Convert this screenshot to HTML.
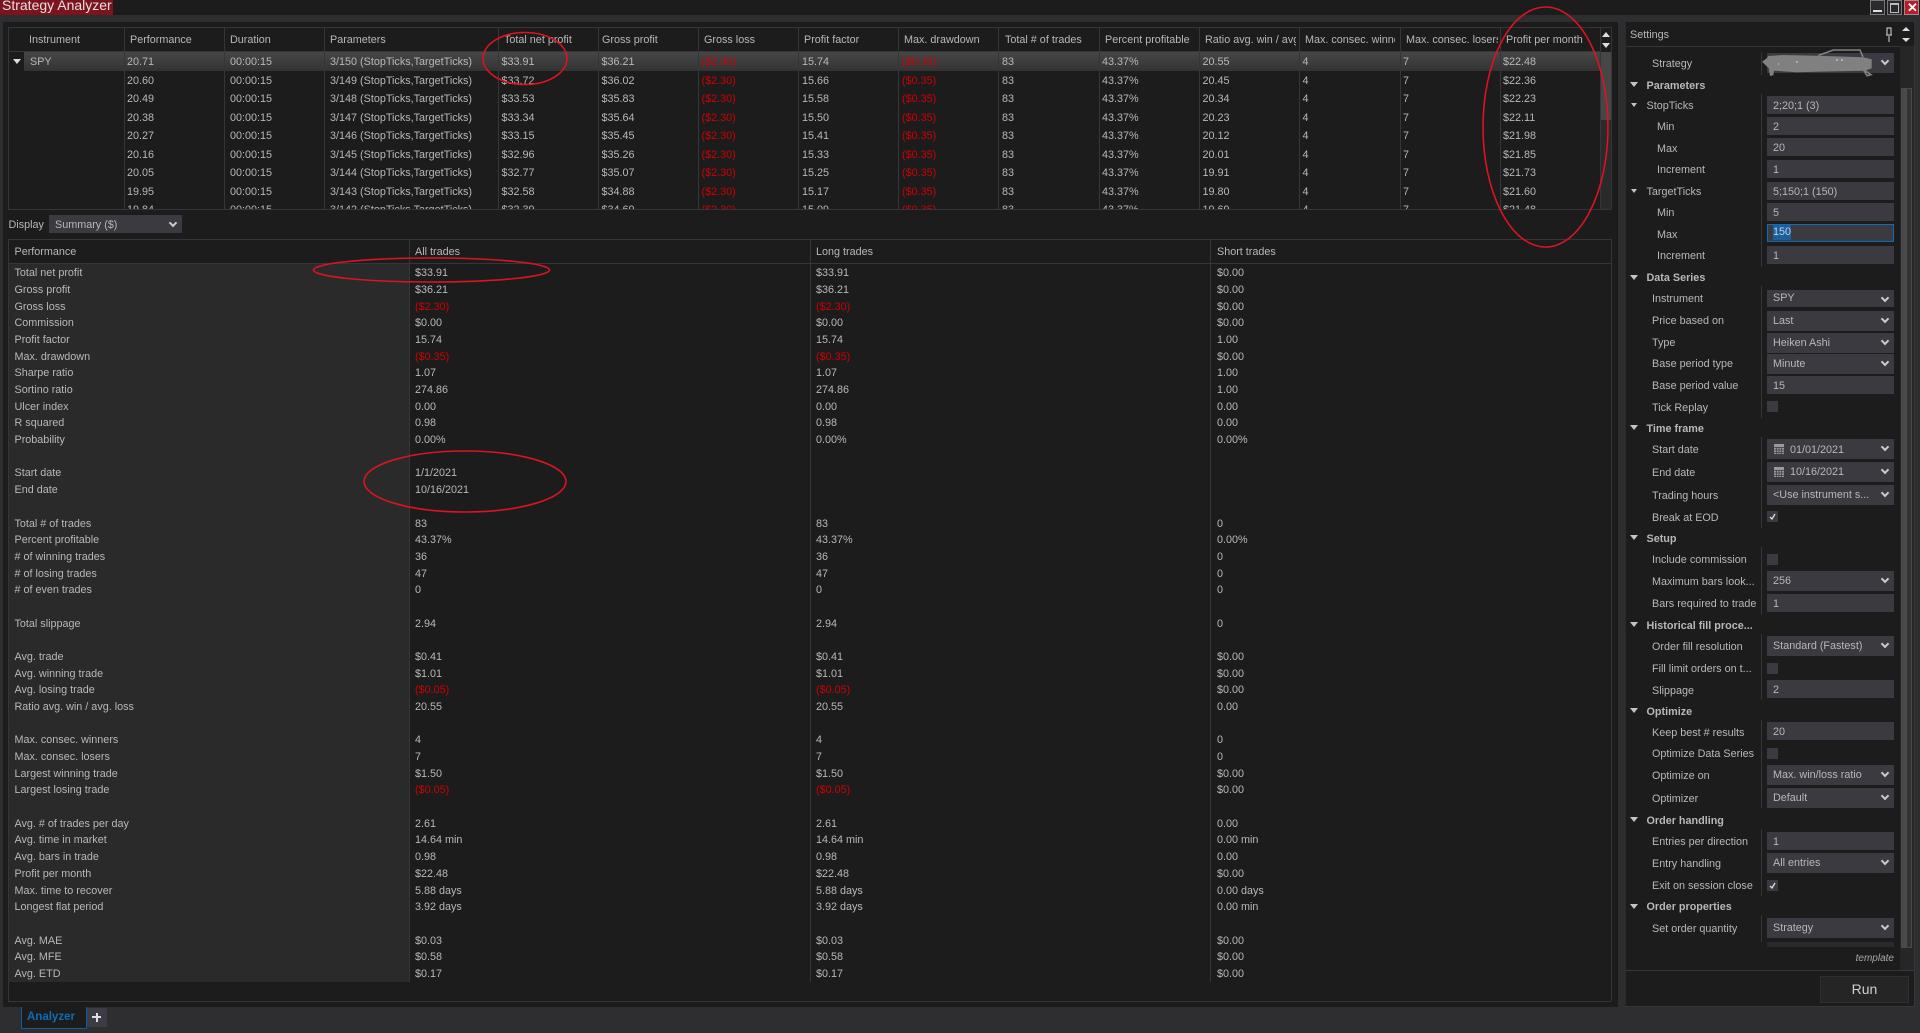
<!DOCTYPE html>
<html><head><meta charset="utf-8"><title>Strategy Analyzer</title>
<style>
html,body{margin:0;padding:0;background:#2e2e30;}
#w{position:relative;width:1920px;height:1033px;overflow:hidden;background:#2e2e30;font:10.8px/16px "Liberation Sans",sans-serif;color:#b8b8b8;}
#w div,#w span{position:absolute;white-space:nowrap;}
.b{background:#1c1c1c;}
.vl{width:1px;background:#36363a;}
.hl{height:1px;background:#36363a;}
.row{left:0;width:1611px;height:18px;}
.row span{top:1px;}
.row span:nth-child(1){left:127px}.row span:nth-child(2){left:230px}.row span:nth-child(3){left:330px}
.row span:nth-child(4){left:501.5px}.row span:nth-child(5){left:601.5px}.row span:nth-child(6){left:701.5px;color:#d00000}
.row span:nth-child(7){left:802px}.row span:nth-child(8){left:902px;color:#d00000}.row span:nth-child(9){left:1002px}
.row span:nth-child(10){left:1102px}.row span:nth-child(11){left:1202.5px}.row span:nth-child(12){left:1302.5px}
.row span:nth-child(13){left:1403px}.row span:nth-child(14){left:1503px}
.hd{top:32px;overflow:hidden;height:16px;}
.s{left:0;width:1611px;height:16px;}
.s span{top:1px}
.s span:nth-child(1){left:14.5px}.s span:nth-child(2){left:415px}.s span:nth-child(3){left:816px}.s span:nth-child(4){left:1217px}
.s .n{color:#d00000}
.l{left:1652px;height:16px;margin-top:1px;}
.l2{left:1657px;height:16px;margin-top:1px;}
.g{left:1646.5px;font-weight:bold;height:16px;margin-top:.5px;}
.t{width:0;height:0;border-left:4px solid transparent;border-right:4px solid transparent;border-top:5px solid #c4c4c4;}
.i{left:1767px;width:127px;height:18px;background:#3a3a40;line-height:18px;}
.i>b{position:absolute;left:6px;top:0;font-weight:normal;white-space:nowrap;}
.i:not(.c)>b{top:1px;}
.c{height:20px;line-height:20px;}
.c::after{content:"";position:absolute;right:6px;top:5px;width:4px;height:4px;border-right:2px solid #ccc;border-bottom:2px solid #ccc;transform:rotate(45deg);}
.x{left:1767px;width:11px;height:11px;background:#3a3a40;}
.win{top:0;width:13px;height:13px;border:1px solid #777;background:#2a2a2c;}
</style></head><body><div id="w">

<div style="left:0;top:0;width:1920px;height:15px;background:#1c1c1c"></div>
<div style="left:0;top:0;width:113px;height:15px;background:#7c1420;overflow:hidden"><span style="left:2px;top:-5px;font-size:14px;line-height:20px;color:#e8e0e0">Strategy Analyzer</span></div>
<div class="win" style="left:1870px"><div style="left:2px;top:9px;width:9px;height:2px;background:#ddd"></div></div>
<div class="win" style="left:1887px"><div style="left:2px;top:2px;width:7px;height:7px;border:1px solid #bbb;border-top-width:2px"></div></div>
<div class="win" style="left:1904px;background:#b3202c;border-color:#a88"><span style="left:2px;top:-1px;font:bold 13px/15px 'Liberation Sans',sans-serif;color:#fff">✕</span></div>

<!-- main panel -->
<div class="b" style="left:3px;top:22px;width:1615px;height:985px"></div>

<!-- top grid -->
<div style="left:8px;top:27px;width:1603px;height:1px;background:#36363a"></div>
<div style="left:8px;top:51px;width:1592px;height:1px;background:#36363a"></div>
<div style="left:8px;top:209px;width:1603px;height:1px;background:#36363a"></div>
<div style="left:8px;top:27px;width:1px;height:182px;background:#36363a"></div>
<div style="left:1611px;top:27px;width:1px;height:182px;background:#36363a"></div>
<div style="left:24px;top:52px;width:1576px;height:19px;background:linear-gradient(#474747,#333)"></div>
<div class="vl" style="left:124px;top:27px;height:182px"></div>
<div class="vl" style="left:224px;top:27px;height:182px"></div>
<div class="vl" style="left:324px;top:27px;height:182px"></div>
<div class="vl" style="left:498px;top:27px;height:182px"></div>
<div class="vl" style="left:598px;top:27px;height:182px"></div>
<div class="vl" style="left:698px;top:27px;height:182px"></div>
<div class="vl" style="left:798px;top:27px;height:182px"></div>
<div class="vl" style="left:898px;top:27px;height:182px"></div>
<div class="vl" style="left:998px;top:27px;height:182px"></div>
<div class="vl" style="left:1099px;top:27px;height:182px"></div>
<div class="vl" style="left:1199px;top:27px;height:182px"></div>
<div class="vl" style="left:1299px;top:27px;height:182px"></div>
<div class="vl" style="left:1400px;top:27px;height:182px"></div>
<div class="vl" style="left:1500px;top:27px;height:182px"></div>
<div class="vl" style="left:1600px;top:27px;height:182px"></div>

<div class="hd" style="left:29px;width:92px">Instrument</div>
<div class="hd" style="left:130px;width:92px">Performance</div>
<div class="hd" style="left:230px;width:92px">Duration</div>
<div class="hd" style="left:330px;width:165px">Parameters</div>
<div class="hd" style="left:504px;width:92px">Total net profit</div>
<div class="hd" style="left:602px;width:92px">Gross profit</div>
<div class="hd" style="left:704px;width:92px">Gross loss</div>
<div class="hd" style="left:804px;width:92px">Profit factor</div>
<div class="hd" style="left:904px;width:92px">Max. drawdown</div>
<div class="hd" style="left:1005px;width:92px">Total # of trades</div>
<div class="hd" style="left:1105px;width:92px">Percent profitable</div>
<div class="hd" style="left:1205px;width:91px">Ratio avg. win / avg. loss</div>
<div class="hd" style="left:1305px;width:90px">Max. consec. winners</div>
<div class="hd" style="left:1406px;width:92px">Max. consec. losers</div>
<div class="hd" style="left:1506px;width:92px">Profit per month</div>

<div class="t" style="left:13px;top:59px;border-top-color:#ddd"></div>
<span style="left:30px;top:53.5px">SPY</span>

<div style="left:0;top:52px;width:1600px;height:157px;overflow:hidden">
<div class="row" style="top:1px"><span>20.71</span><span>00:00:15</span><span>3/150 (StopTicks,TargetTicks)</span><span>$33.91</span><span>$36.21</span><span>($2.30)</span><span>15.74</span><span>($0.35)</span><span>83</span><span>43.37%</span><span>20.55</span><span>4</span><span>7</span><span>$22.48</span></div>
<div class="row" style="top:19.5px"><span>20.60</span><span>00:00:15</span><span>3/149 (StopTicks,TargetTicks)</span><span>$33.72</span><span>$36.02</span><span>($2.30)</span><span>15.66</span><span>($0.35)</span><span>83</span><span>43.37%</span><span>20.45</span><span>4</span><span>7</span><span>$22.36</span></div>
<div class="row" style="top:38px"><span>20.49</span><span>00:00:15</span><span>3/148 (StopTicks,TargetTicks)</span><span>$33.53</span><span>$35.83</span><span>($2.30)</span><span>15.58</span><span>($0.35)</span><span>83</span><span>43.37%</span><span>20.34</span><span>4</span><span>7</span><span>$22.23</span></div>
<div class="row" style="top:56.5px"><span>20.38</span><span>00:00:15</span><span>3/147 (StopTicks,TargetTicks)</span><span>$33.34</span><span>$35.64</span><span>($2.30)</span><span>15.50</span><span>($0.35)</span><span>83</span><span>43.37%</span><span>20.23</span><span>4</span><span>7</span><span>$22.11</span></div>
<div class="row" style="top:75px"><span>20.27</span><span>00:00:15</span><span>3/146 (StopTicks,TargetTicks)</span><span>$33.15</span><span>$35.45</span><span>($2.30)</span><span>15.41</span><span>($0.35)</span><span>83</span><span>43.37%</span><span>20.12</span><span>4</span><span>7</span><span>$21.98</span></div>
<div class="row" style="top:93.5px"><span>20.16</span><span>00:00:15</span><span>3/145 (StopTicks,TargetTicks)</span><span>$32.96</span><span>$35.26</span><span>($2.30)</span><span>15.33</span><span>($0.35)</span><span>83</span><span>43.37%</span><span>20.01</span><span>4</span><span>7</span><span>$21.85</span></div>
<div class="row" style="top:112px"><span>20.05</span><span>00:00:15</span><span>3/144 (StopTicks,TargetTicks)</span><span>$32.77</span><span>$35.07</span><span>($2.30)</span><span>15.25</span><span>($0.35)</span><span>83</span><span>43.37%</span><span>19.91</span><span>4</span><span>7</span><span>$21.73</span></div>
<div class="row" style="top:130.5px"><span>19.95</span><span>00:00:15</span><span>3/143 (StopTicks,TargetTicks)</span><span>$32.58</span><span>$34.88</span><span>($2.30)</span><span>15.17</span><span>($0.35)</span><span>83</span><span>43.37%</span><span>19.80</span><span>4</span><span>7</span><span>$21.60</span></div>
<div class="row" style="top:149px"><span>19.84</span><span>00:00:15</span><span>3/142 (StopTicks,TargetTicks)</span><span>$32.39</span><span>$34.69</span><span>($2.30)</span><span>15.09</span><span>($0.35)</span><span>83</span><span>43.37%</span><span>19.69</span><span>4</span><span>7</span><span>$21.48</span></div>
</div>

<!-- top grid scrollbar -->
<div style="left:1601px;top:52px;width:10px;height:157px;background:#2a2a2a"></div>
<div style="left:1601px;top:52px;width:10px;height:68px;background:#464646"></div>
<div class="t" style="left:1602px;top:32px;border-top:0;border-bottom:5px solid #ddd"></div>
<div class="t" style="left:1602px;top:43px;border-top-color:#ddd"></div>

<!-- display -->
<span style="left:8.5px;top:217px">Display</span>
<div class="i c" style="left:49px;top:215px;width:133px;height:18px;line-height:18px"><b style="top:.5px">Summary ($)</b></div>

<!-- summary grid -->
<div style="left:9px;top:263px;width:400px;height:719px;background:#2a2a2a"></div>
<div style="left:8px;top:239px;width:1603px;height:1px;background:#36363a"></div>
<div style="left:8px;top:263px;width:1603px;height:1px;background:#36363a"></div>
<div style="left:8px;top:1001px;width:1603px;height:1px;background:#36363a"></div>
<div style="left:8px;top:239px;width:1px;height:762px;background:#36363a"></div>
<div style="left:1611px;top:239px;width:1px;height:762px;background:#36363a"></div>
<div class="vl" style="left:409px;top:239px;height:743px"></div>
<div class="vl" style="left:810px;top:239px;height:743px"></div>
<div class="vl" style="left:1210px;top:239px;height:743px"></div>

<div class="s" style="top:243px"><span>Performance</span><span>All trades</span><span>Long trades</span><span>Short trades</span></div>
<div class="s" style="top:264.3px"><span>Total net profit</span><span>$33.91</span><span>$33.91</span><span>$0.00</span></div>
<div class="s" style="top:281px"><span>Gross profit</span><span>$36.21</span><span>$36.21</span><span>$0.00</span></div>
<div class="s" style="top:297.7px"><span>Gross loss</span><span class="n">($2.30)</span><span class="n">($2.30)</span><span>$0.00</span></div>
<div class="s" style="top:314.3px"><span>Commission</span><span>$0.00</span><span>$0.00</span><span>$0.00</span></div>
<div class="s" style="top:331px"><span>Profit factor</span><span>15.74</span><span>15.74</span><span>1.00</span></div>
<div class="s" style="top:347.7px"><span>Max. drawdown</span><span class="n">($0.35)</span><span class="n">($0.35)</span><span>$0.00</span></div>
<div class="s" style="top:364.4px"><span>Sharpe ratio</span><span>1.07</span><span>1.07</span><span>1.00</span></div>
<div class="s" style="top:381px"><span>Sortino ratio</span><span>274.86</span><span>274.86</span><span>1.00</span></div>
<div class="s" style="top:397.7px"><span>Ulcer index</span><span>0.00</span><span>0.00</span><span>0.00</span></div>
<div class="s" style="top:414.4px"><span>R squared</span><span>0.98</span><span>0.98</span><span>0.00</span></div>
<div class="s" style="top:431.1px"><span>Probability</span><span>0.00%</span><span>0.00%</span><span>0.00%</span></div>
<div class="s" style="top:464.4px"><span>Start date</span><span>1/1/2021</span></div>
<div class="s" style="top:481.1px"><span>End date</span><span>10/16/2021</span></div>
<div class="s" style="top:514.5px"><span>Total # of trades</span><span>83</span><span>83</span><span>0</span></div>
<div class="s" style="top:531.2px"><span>Percent profitable</span><span>43.37%</span><span>43.37%</span><span>0.00%</span></div>
<div class="s" style="top:547.9px"><span># of winning trades</span><span>36</span><span>36</span><span>0</span></div>
<div class="s" style="top:564.5px"><span># of losing trades</span><span>47</span><span>47</span><span>0</span></div>
<div class="s" style="top:581.2px"><span># of even trades</span><span>0</span><span>0</span><span>0</span></div>
<div class="s" style="top:614.6px"><span>Total slippage</span><span>2.94</span><span>2.94</span><span>0</span></div>
<div class="s" style="top:647.9px"><span>Avg. trade</span><span>$0.41</span><span>$0.41</span><span>$0.00</span></div>
<div class="s" style="top:664.6px"><span>Avg. winning trade</span><span>$1.01</span><span>$1.01</span><span>$0.00</span></div>
<div class="s" style="top:681.3px"><span>Avg. losing trade</span><span class="n">($0.05)</span><span class="n">($0.05)</span><span>$0.00</span></div>
<div class="s" style="top:698px"><span>Ratio avg. win / avg. loss</span><span>20.55</span><span>20.55</span><span>0.00</span></div>
<div class="s" style="top:731.3px"><span>Max. consec. winners</span><span>4</span><span>4</span><span>0</span></div>
<div class="s" style="top:748px"><span>Max. consec. losers</span><span>7</span><span>7</span><span>0</span></div>
<div class="s" style="top:764.7px"><span>Largest winning trade</span><span>$1.50</span><span>$1.50</span><span>$0.00</span></div>
<div class="s" style="top:781.4px"><span>Largest losing trade</span><span class="n">($0.05)</span><span class="n">($0.05)</span><span>$0.00</span></div>
<div class="s" style="top:814.7px"><span>Avg. # of trades per day</span><span>2.61</span><span>2.61</span><span>0.00</span></div>
<div class="s" style="top:831.4px"><span>Avg. time in market</span><span>14.64 min</span><span>14.64 min</span><span>0.00 min</span></div>
<div class="s" style="top:848.1px"><span>Avg. bars in trade</span><span>0.98</span><span>0.98</span><span>0.00</span></div>
<div class="s" style="top:864.8px"><span>Profit per month</span><span>$22.48</span><span>$22.48</span><span>$0.00</span></div>
<div class="s" style="top:881.5px"><span>Max. time to recover</span><span>5.88 days</span><span>5.88 days</span><span>0.00 days</span></div>
<div class="s" style="top:898.1px"><span>Longest flat period</span><span>3.92 days</span><span>3.92 days</span><span>0.00 min</span></div>
<div class="s" style="top:931.5px"><span>Avg. MAE</span><span>$0.03</span><span>$0.03</span><span>$0.00</span></div>
<div class="s" style="top:948.2px"><span>Avg. MFE</span><span>$0.58</span><span>$0.58</span><span>$0.00</span></div>
<div class="s" style="top:964.9px"><span>Avg. ETD</span><span>$0.17</span><span>$0.17</span><span>$0.00</span></div>

<!-- bottom tabs -->
<div style="left:21px;top:1007px;width:64px;height:21px;background:#1c1c1c;border:1px solid #0f5f9e;border-top:0"></div>
<span style="left:27px;top:1009px;font-size:11.5px;font-weight:bold;color:#0f6cb5">Analyzer</span>
<div style="left:87px;top:1008px;width:20px;height:19px;background:#3c3c44"></div>
<div style="left:92px;top:1016px;width:9px;height:2px;background:#ddd"></div>
<div style="left:95.5px;top:1012.5px;width:2px;height:9px;background:#ddd"></div>

<!-- settings panel -->
<div class="b" style="left:1625px;top:22px;width:289px;height:985px"></div>
<div style="left:1625px;top:46px;width:275px;height:1px;background:#36363a"></div>
<div style="left:1625px;top:22px;width:1px;height:985px;background:#2a2a2a"></div>
<span style="left:1630px;top:27px">Settings</span>
<svg style="position:absolute;left:1885px;top:27px" width="8" height="15" viewBox="0 0 8 15"><path d="M2 1h4v7H2zM1 8h6M4 9v6" fill="none" stroke="#bbb" stroke-width="1.2"/></svg>
<div class="t" style="left:1902px;top:27px;border-top:0;border-bottom:4px solid #ddd"></div>
<div class="t" style="left:1902px;top:38px;border-top-color:#ddd;border-top-width:4px"></div>
<div style="left:1900px;top:46px;width:14px;height:924px;background:#262626"></div>
<div style="left:1901px;top:88px;width:11px;height:860px;background:#4a4a4a;border:0"></div>
<div style="left:1907px;top:89px;width:4px;height:858px;background:#333"></div>
<div style="left:1625px;top:970px;width:289px;height:1px;background:#36363a"></div>
<div style="left:1625px;top:1006px;width:289px;height:1px;background:#36363a"></div>
<div style="left:1914px;top:46px;width:1px;height:961px;background:#36363a"></div>

<div class="vl" style="left:1761px;top:52px;height:23px"></div>
<div class="vl" style="left:1761px;top:94px;height:173px"></div>
<div class="vl" style="left:1761px;top:286px;height:132px"></div>
<div class="vl" style="left:1761px;top:437px;height:91px"></div>
<div class="vl" style="left:1761px;top:547px;height:68px"></div>
<div class="vl" style="left:1761px;top:634px;height:66px"></div>
<div class="vl" style="left:1761px;top:720px;height:88px"></div>
<div class="vl" style="left:1761px;top:829px;height:67px"></div>
<div class="vl" style="left:1761px;top:915px;height:27px"></div>

<span class="l" style="top:55px">Strategy</span>
<div class="i c" style="top:53px;height:20px"></div>
<svg style="position:absolute;left:1760px;top:48px" width="120" height="30" viewBox="0 0 120 30"><path d="M2 13.7 6.7 10.3 8.3 8 23 7 56.7 7.7 103 9.3 111.7 11.3 111.7 20.3 105 22.7 55 23.7 36.7 24.3 14 22.7 13.3 27.3 10 28 8.7 20.3Z" fill="#808080"/><path d="M58.3 7.5 73.3 2H100L103 9M105 22.7l6 4-4 1-3-5" fill="none" stroke="#808080" stroke-width="1.6"/><path d="M36 14h2M76 12h2M81 12h2M18 16h1" stroke="#ddd" stroke-width="1"/></svg>

<div class="t" style="left:1630px;top:82px"></div><span class="g" style="top:77px">Parameters</span>
<div class="t" style="left:1631px;top:103px;border-left-width:3.5px;border-right-width:3.5px;border-top-width:4px"></div><span class="l" style="left:1646.5px;top:97px">StopTicks</span>
<div class="i" style="top:96px"><b>2;20;1 (3)</b></div>
<span class="l2" style="top:118px">Min</span><div class="i" style="top:117px"><b>2</b></div>
<span class="l2" style="top:139.5px">Max</span><div class="i" style="top:138px"><b>20</b></div>
<span class="l2" style="top:161px">Increment</span><div class="i" style="top:160px"><b>1</b></div>
<div class="t" style="left:1631px;top:189px;border-left-width:3.5px;border-right-width:3.5px;border-top-width:4px"></div><span class="l" style="left:1646.5px;top:183px">TargetTicks</span>
<div class="i" style="top:182px"><b>5;150;1 (150)</b></div>
<span class="l2" style="top:204px">Min</span><div class="i" style="top:203px"><b>5</b></div>
<span class="l2" style="top:225.5px">Max</span><div class="i" style="top:224px;height:16px;border:1px solid #0f6cb5;width:125px;background:#3a3a40"><b style="left:5px;top:0;line-height:15px;background:#1f5f99;color:#b8d4ee">150</b></div>
<span class="l2" style="top:247px">Increment</span><div class="i" style="top:246px"><b>1</b></div>

<div class="t" style="left:1630px;top:275px"></div><span class="g" style="top:269px">Data Series</span>
<span class="l" style="top:290px">Instrument</span><div class="i c" style="top:289.5px;height:17px;line-height:17px"><b>SPY</b></div>
<span class="l" style="top:312px">Price based on</span><div class="i c" style="top:310.5px"><b>Last</b></div>
<span class="l" style="top:334px">Type</span><div class="i c" style="top:333px"><b>Heiken Ashi</b></div>
<span class="l" style="top:355px">Base period type</span><div class="i c" style="top:354px"><b>Minute</b></div>
<span class="l" style="top:377px">Base period value</span><div class="i" style="top:376px"><b>15</b></div>
<span class="l" style="top:398.5px">Tick Replay</span><div class="x" style="top:401px"></div>

<div class="t" style="left:1630px;top:425px"></div><span class="g" style="top:420px">Time frame</span>
<span class="l" style="top:441px">Start date</span><div class="i c" style="top:439px"><b style="left:23px;top:.5px">01/01/2021</b></div>
<span class="l" style="top:464px">End date</span><div class="i c" style="top:462px"><b style="left:23px">10/16/2021</b></div>
<svg style="position:absolute;left:1774px;top:444px" width="10" height="10" viewBox="0 0 10 10"><rect width="10" height="10" fill="#9a9a9a"/><path d="M0 3.5h10M0 6h10M0 8.5h10M2.5 3v7M5 3v7M7.5 3v7" stroke="#3a3a40" stroke-width=".7"/></svg>
<svg style="position:absolute;left:1774px;top:467px" width="10" height="10" viewBox="0 0 10 10"><rect width="10" height="10" fill="#9a9a9a"/><path d="M0 3.5h10M0 6h10M0 8.5h10M2.5 3v7M5 3v7M7.5 3v7" stroke="#3a3a40" stroke-width=".7"/></svg>
<span class="l" style="top:486.5px">Trading hours</span><div class="i c" style="top:485px"><b>&lt;Use instrument s...</b></div>
<span class="l" style="top:508.5px">Break at EOD</span><div class="x" style="top:511px"><svg style="position:absolute;left:2px;top:2px" width="7" height="7" viewBox="0 0 7 7"><path d="M1 4l2 2 3-5" fill="none" stroke="#ddd" stroke-width="1.3"/></svg></div>

<div class="t" style="left:1630px;top:535px"></div><span class="g" style="top:530px">Setup</span>
<span class="l" style="top:551px">Include commission</span><div class="x" style="top:554px"></div>
<span class="l" style="top:573px">Maximum bars look...</span><div class="i c" style="top:571px"><b>256</b></div>
<span class="l" style="top:595px">Bars required to trade</span><div class="i" style="top:594px"><b>1</b></div>

<div class="t" style="left:1630px;top:622px"></div><span class="g" style="top:617px">Historical fill proce...</span>
<span class="l" style="top:638px">Order fill resolution</span><div class="i c" style="top:636px"><b>Standard (Fastest)</b></div>
<span class="l" style="top:660px">Fill limit orders on t...</span><div class="x" style="top:663px"></div>
<span class="l" style="top:681.5px">Slippage</span><div class="i" style="top:680px"><b>2</b></div>

<div class="t" style="left:1630px;top:708px"></div><span class="g" style="top:703px">Optimize</span>
<span class="l" style="top:724px">Keep best # results</span><div class="i" style="top:722px"><b>20</b></div>
<span class="l" style="top:745px">Optimize Data Series</span><div class="x" style="top:748px"></div>
<span class="l" style="top:767px">Optimize on</span><div class="i c" style="top:765px"><b>Max. win/loss ratio</b></div>
<span class="l" style="top:790px">Optimizer</span><div class="i c" style="top:788px"><b>Default</b></div>

<div class="t" style="left:1630px;top:817px"></div><span class="g" style="top:812px">Order handling</span>
<span class="l" style="top:833px">Entries per direction</span><div class="i" style="top:832px"><b>1</b></div>
<span class="l" style="top:855px">Entry handling</span><div class="i c" style="top:853px"><b>All entries</b></div>
<span class="l" style="top:877px">Exit on session close</span><div class="x" style="top:880px"><svg style="position:absolute;left:2px;top:2px" width="7" height="7" viewBox="0 0 7 7"><path d="M1 4l2 2 3-5" fill="none" stroke="#ddd" stroke-width="1.3"/></svg></div>

<div class="t" style="left:1630px;top:904px"></div><span class="g" style="top:898.5px">Order properties</span>
<span class="l" style="top:920px">Set order quantity</span><div class="i c" style="top:918px"><b>Strategy</b></div>
<div style="left:1767px;top:942px;width:127px;height:5px;background:#2a2a2e"></div>

<span style="right:26px;top:951px;font-style:italic;font-size:10px;color:#a8a8a8">template</span>
<div style="left:1820px;top:976px;width:87px;height:25px;background:#252525;border:1px solid #2e2e2e;text-align:center;font-size:14px;line-height:25px;color:#cfcfcf">Run</div>

<!-- red annotations -->
<svg style="position:absolute;left:0;top:0" width="1920" height="1033" viewBox="0 0 1920 1033">
<g fill="none" stroke="#dc1420" stroke-width="1.6">
<ellipse cx="525" cy="58.5" rx="42" ry="26"/>
<ellipse cx="431.5" cy="270" rx="118" ry="12"/>
<ellipse cx="465" cy="481.5" rx="101" ry="30.5"/>
<ellipse cx="1545.5" cy="127" rx="62.5" ry="120"/>
</g></svg>
</div></body></html>
